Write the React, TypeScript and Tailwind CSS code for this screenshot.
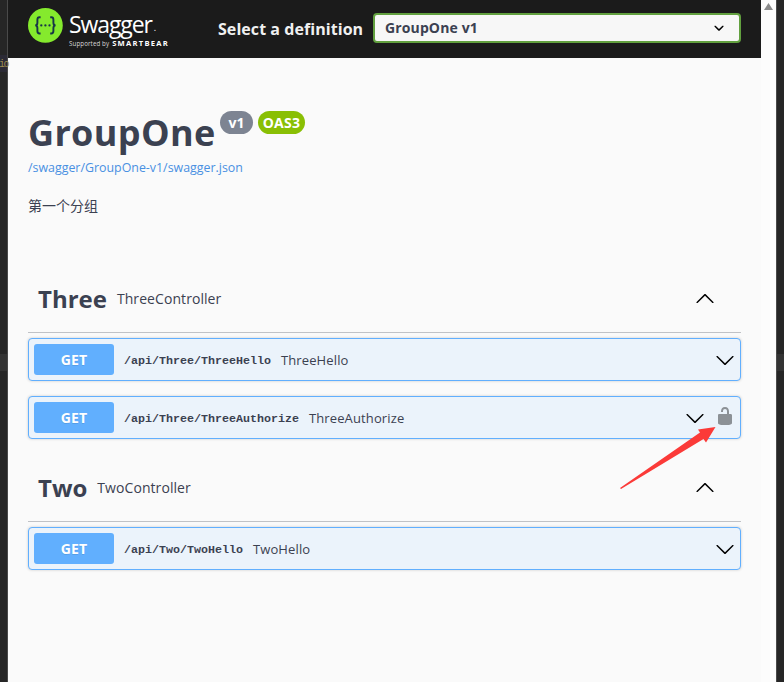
import type { ReactNode } from "react";

function Chevron({ up = false }: { up?: boolean }) {
  return (
    <svg width="20" height="20" viewBox="0 0 20 20" className={up ? "rotate-180" : ""}>
      <path
        fill="#000"
        d="M17.418 6.109c.272-.268.709-.268.979 0s.271.701 0 .969l-7.908 7.83c-.27.268-.707.268-.979 0l-7.908-7.83c-.27-.268-.27-.701 0-.969.271-.268.709-.268.979 0L10 13.25l7.418-7.141z"
      />
    </svg>
  );
}

function Unlock() {
  return (
    <svg width="20" height="20" viewBox="0 0 20 20" className="mb-[3px] opacity-40">
      <path
        fill="#000"
        d="M15.8 8H14V5.6C14 2.703 12.665 1 10 1 7.334 1 6 2.703 6 5.6V6h2v-.801C8 3.754 8.797 3 10 3c1.203 0 2 .754 2 2.199V8H4c-.553 0-1 .646-1 1.199V17c0 .549.428 1.139.951 1.307l1.197.387C5.672 18.861 6.55 19 7.1 19h5.8c.549 0 1.428-.139 1.951-.307l1.196-.387c.524-.167.953-.757.953-1.306V9.199C17 8.646 16.352 8 15.8 8z"
      />
    </svg>
  );
}

function Operation({ path, summary, locked }: { path: ReactNode; summary: ReactNode; locked?: boolean }) {
  return (
    <div className="flex h-[43px] items-center rounded border border-[#61affe] bg-[#ebf3fb] pl-[5px] pr-[5px] shadow-[0_0_3px_rgba(0,0,0,0.19)]">
      <span className="flex h-[31px] w-20 items-center justify-center rounded-[3px] bg-[#61affe] text-[14px] font-bold tracking-[0.1px] text-white [text-shadow:0_1px_0_rgba(0,0,0,0.1)]">
        GET
      </span>
      <span className="ml-[10px] whitespace-nowrap pt-[4px] font-['Liberation_Mono',monospace] text-[11.67px] font-bold text-[#3b4151]">
        {path}
      </span>
      <span className="ml-[10px] grow whitespace-nowrap pt-[2px] text-[13px] tracking-[0.13px]">{summary}</span>
      <span className="flex items-center gap-[10px]">
        <Chevron />
        {locked && <Unlock />}
      </span>
    </div>
  );
}

function TagHeader({ name, description }: { name: ReactNode; description: ReactNode }) {
  return (
    <div className="flex h-[68px] items-center border-b border-[#3b4151]/30 pl-[10px] pr-[26px]">
      <h3 className="text-[24px] font-bold">{name}</h3>
      <span className="ml-[10px] grow text-[14px] tracking-[0.07px]">{description}</span>
      <Chevron up />
    </div>
  );
}

function Logo() {
  return (
    <div className="flex h-[42px] w-[142px] gap-[6px]">
      <svg width="35" height="35" viewBox="0 0 35 35" className="shrink-0">
        <circle cx="17.4" cy="17.4" r="17.4" fill="#85ea2d" />
        <g fill="none" stroke="#173647" strokeWidth="1.9">
          <path d="M12.6 9.3h-1.2c-1.6 0-2 1-2 2.4v3c0 1.8-.7 2.7-2.2 2.7 1.5 0 2.2.9 2.2 2.7v3c0 1.4.4 2.4 2 2.4h1.2" />
          <path d="M22.2 9.3h1.2c1.6 0 2 1 2 2.4v3c0 1.8.7 2.7 2.2 2.7-1.5 0-2.2.9-2.2 2.7v3c0 1.4-.4 2.4-2 2.4h-1.2" />
        </g>
        <g fill="#173647">
          <circle cx="13.3" cy="17.4" r="1.15" />
          <circle cx="17.4" cy="17.4" r="1.15" />
          <circle cx="21.5" cy="17.4" r="1.15" />
        </g>
      </svg>
      <div className="flex flex-col whitespace-nowrap text-white">
        <span className="flex h-[31px] items-center pt-[2px] text-[23px] tracking-[-1.1px]">
          Swagger<span className="ml-[2px] pt-[6px] text-[9px]">.</span>
        </span>
        <span className="flex h-[10px] items-center gap-[3px]">
          <span className="text-[6.2px] tracking-[0.1px] text-[#d8d8d8]">Supported by</span>
          <span className="text-[7.6px] font-bold tracking-[1.25px]">SMARTBEAR</span>
        </span>
      </div>
    </div>
  );
}

export default function App() {
  return (
    <div className="relative flex h-[682px] w-[784px] overflow-hidden bg-[#fafafa] font-['Open_Sans','Noto_Sans_CJK_SC',sans-serif] text-[#3b4151]">
      <div className="flex w-2 shrink-0 flex-col border-r border-[#4a4a4a] bg-[#262626]">
        <div className="mt-[55px] flex h-[17px] items-center bg-[#2b2a35] font-['Liberation_Mono',monospace] text-[10px] tracking-[-1.5px] text-[#9c8c50]">
          <span className="-ml-px pt-[2px]">io</span>
        </div>
        <div className="mt-[282px] h-[17px] bg-[#333]" />
      </div>

      <main className="flex w-[753px] shrink-0 flex-col">
        <header className="flex h-[58px] items-start bg-[#1b1b1b] px-5">
          <div className="pt-[8px]">
            <Logo />
          </div>
          <label className="ml-[48px] flex h-[58px] w-[155px] items-center whitespace-nowrap text-[16px] font-bold tracking-[0.06px] text-[#f0f0f0]">
            Select a definition
          </label>
          <div className="mt-[13px] flex h-[30px] grow items-center justify-between rounded border-2 border-[#62a03f] bg-[#f7f7f7] pl-[10px] pr-[10px] text-[14px] font-bold tracking-[0.13px]">
            <span className="pb-[2px]">GroupOne v1</span>
            <svg width="20" height="20" viewBox="0 0 20 20">
              <path
                fill="#000"
                d="M13.418 7.859c.271-.268.709-.268.978 0 .27.268.272.701 0 .969l-3.908 3.83c-.27.268-.707.268-.979 0l-3.908-3.83c-.27-.267-.27-.701 0-.969.271-.268.709-.268.978 0L10 11l3.418-3.141z"
              />
            </svg>
          </div>
        </header>

        <div className="flex flex-col px-5">
          <div className="mt-[50px] flex h-[49px] items-start">
            <h2 className="w-[192px] whitespace-nowrap text-[36px] font-bold leading-[49px] tracking-[0.35px]">GroupOne</h2>
            <span className="mt-[3px] flex h-[23px] w-[33px] items-center justify-center rounded-full bg-[#7d8492] text-[14px] font-bold text-white">
              v1
            </span>
            <span className="ml-[5px] mt-[3px] flex h-[23px] w-[47px] items-center justify-center rounded-full bg-[#89bf04] text-[14px] font-bold tracking-[0.3px] text-white">
              OAS3
            </span>
          </div>
          <a className="mt-[1px] h-5 whitespace-nowrap text-[12.4px] leading-5 text-[#4990e2]">/swagger/GroupOne-v1/swagger.json</a>
          <p className="mt-[18px] h-5 text-[14px] leading-5">第一个分组</p>

          <section className="mt-[49px] flex flex-col">
            <TagHeader name="Three" description="ThreeController" />
            <div className="mt-[5px] flex flex-col gap-[15px]">
              <Operation path="/api/Three/ThreeHello" summary="ThreeHello" />
              <Operation path="/api/Three/ThreeAuthorize" summary="ThreeAuthorize" locked />
            </div>
          </section>
          <section className="mt-[15px] flex flex-col">
            <TagHeader name="Two" description="TwoController" />
            <div className="mt-[5px] flex flex-col">
              <Operation path="/api/Two/TwoHello" summary="TwoHello" />
            </div>
          </section>
        </div>
      </main>

      <div className="flex w-[15px] shrink-0 justify-center bg-[#fcfcfc]">
        <svg width="9" height="12" viewBox="0 0 9 12">
          <path d="M0 10 4.5 3 9 10z" fill="#8b8b8b" />
        </svg>
      </div>
      <div className="flex grow flex-col border-l border-[#4a4a4a] bg-[#262626]">
        <div className="mt-[354px] h-[17px] bg-[#333]" />
      </div>

      <svg className="absolute left-[618px] top-[424px]" width="100" height="68" viewBox="618 424 100 68">
        <path d="M620 488 700 432.5 698 429.5 715.5 427 706 442.5 703.5 439 621 489Z" fill="#fb3a38" />
      </svg>
    </div>
  );
}
